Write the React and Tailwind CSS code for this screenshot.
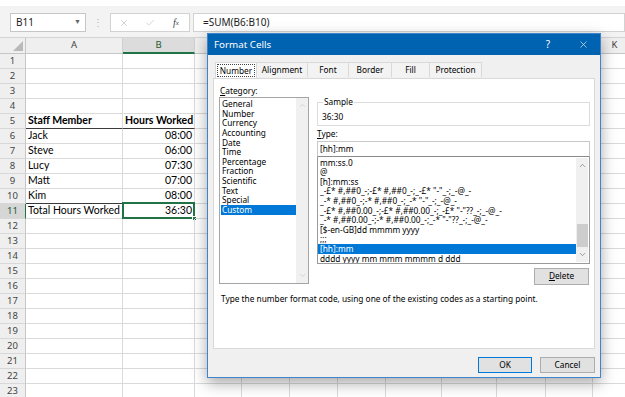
import { ChevronUp, ChevronDown, X, Check } from "lucide-react";

const cols = [
  { k: "A", w: "w-[97px]" },
  { k: "B", w: "w-[72px]" },
  { k: "C", w: "w-[47px]" },
  { k: "D", w: "w-[48px]" },
  { k: "E", w: "w-[48px]" },
  { k: "F", w: "w-[48px]" },
  { k: "G", w: "w-[56px]" },
  { k: "H", w: "w-[55px]" },
  { k: "I", w: "w-[49px]" },
  { k: "J", w: "w-[47px]" },
  { k: "K", w: "w-[44px]" },
];

// headers C..J sit under the dialog, only these letters show
const shownHeaders = ["A", "B", "K"];

const data = {
  5: ["Staff Member", "Hours Worked", true],
  6: ["Jack", "08:00"],
  7: ["Steve", "06:00"],
  8: ["Lucy", "07:30"],
  9: ["Matt", "07:00"],
  10: ["Kim", "08:00"],
  11: ["Total Hours Worked", "36:30"],
};

const categories = [
  "General", "Number", "Currency", "Accounting", "Date", "Time",
  "Percentage", "Fraction", "Scientific", "Text", "Special", "Custom",
];

const formats = [
  "mm:ss.0",
  "@",
  "[h]:mm:ss",
  '_-£* #,##0_-;-£* #,##0_-;_-£* "-"_-;_-@_-',
  '_-* #,##0_-;-* #,##0_-;_-* "-"_-;_-@_-',
  '_-£* #,##0.00_-;-£* #,##0.00_-;_-£* "-"??_-;_-@_-',
  '_-* #,##0.00_-;-* #,##0.00_-;_-* "-"??_-;_-@_-',
  "[$-en-GB]dd mmmm yyyy",
  ";;;",
  "[hh]:mm",
  "dddd yyyy mm mmm mmmm d ddd",
];

const tabs = [
  { t: "Alignment", w: "w-[51px]" },
  { t: "Font", w: "w-[41px]" },
  { t: "Border", w: "w-[43px]" },
  { t: "Fill", w: "w-[38px]" },
  { t: "Protection", w: "w-[52px]" },
];

const rowNums = Array.from({ length: 23 }, (_, i) => i + 1);

function Row({ n }) {
  const d = data[n];
  const sel = n === 11;
  return (
    <div className="flex h-[15px] shrink-0">
      <div
        className={`flex w-[26px] shrink-0 items-center justify-center border-b border-r border-b-[#d8d8d8] text-[9.5px] ${
          sel ? "bg-[#d6d6d6] border-r-[#217346] text-[#1f5a36]" : "bg-[#efefef] border-r-[#c6c6c6] text-[#444]"
        }`}
      >
        {n}
      </div>
      {cols.map((c, i) => {
        const dark = (n === 5 || n === 10) && i < 2;
        return (
          <div
            key={c.k}
            className={`relative flex ${c.w} shrink-0 items-center overflow-visible whitespace-nowrap border-b border-r border-r-[#dadada] font-['Lato',sans-serif] text-[10.5px] text-black ${
              dark ? "border-b-[#3a3a3a]" : "border-b-[#dadada]"
            } ${i === 1 && !(d && d[2]) ? "justify-end pr-[2px]" : "pl-[2px]"} ${d && d[2] ? "font-bold" : ""}`}
          >
            {d && i < 2 ? d[i] : ""}
            {sel && i === 1 && (
              <>
                <div className="absolute -left-[1px] -top-[2px] h-[17px] w-[73px] border-2 border-[#217346]" />
                <div className="absolute -bottom-[3px] -right-[3px] h-[5px] w-[5px] border border-white bg-[#217346]" />
              </>
            )}
          </div>
        );
      })}
    </div>
  );
}

function Scrollbar({ thumb, dim, className }) {
  return (
    <div className={`flex w-[12px] shrink-0 flex-col items-center justify-between bg-[#f0f0f0] py-[3px] ${className}`}>
      <ChevronUp size={9} strokeWidth={1.6} className={dim ? "text-[#c2c2c2]" : "text-[#606060]"} />
      {thumb}
      <ChevronDown size={9} strokeWidth={1.6} className={dim ? "text-[#c2c2c2]" : "text-[#606060]"} />
    </div>
  );
}

function FormatCells() {
  return (
    <div className="absolute left-[207px] top-[33px] flex h-[345px] w-[394px] flex-col border border-[#3c84cc] bg-[#f0f0f0] font-['Noto_Sans',sans-serif] text-[8.3px] leading-[9.65px] text-black shadow-[0_5px_14px_rgba(0,0,0,0.35)]">
      <div className="flex h-[21px] shrink-0 items-center bg-[#0063b1] pl-[6px] text-white">
        <span className="text-[9.8px]">Format Cells</span>
        <span className="ml-auto text-[10px]">?</span>
        <X size={11} strokeWidth={1.3} className="ml-[28px] mr-[11px]" />
      </div>

      <div className="px-[5px] pt-[7px]">
        <div className="flex h-[16px] pl-[2px]">
          <div className="relative z-10 -mb-[1px] flex h-[16px] w-[42px] items-center justify-center border border-b-0 border-[#d9d9d9] bg-white">
            <div className="flex h-[13px] w-[38px] items-center justify-center border border-dotted border-[#444]">Number</div>
          </div>
          {tabs.map((t) => (
            <div key={t.t} className={`flex h-[15px] ${t.w} items-center justify-center border border-l-0 border-b-0 border-[#d9d9d9] bg-[#f3f3f3]`}>
              {t.t}
            </div>
          ))}
        </div>

        <div className="flex h-[271px] flex-col border border-[#d9d9d9] bg-white pt-[7px]">
          <div className="flex pl-[5px] pr-[4px]">
            <div className="flex w-[90px] shrink-0 flex-col">
              <div className="h-[11px] pl-[1px]"><u>C</u>ategory:</div>
              <div className="flex h-[187px] border border-[#a5a5a5] bg-white">
                <div className="flex flex-1 flex-col pl-[1px] pt-[1px]">
                  {categories.map((c) => (
                    <div key={c} className={`h-[9.65px] pl-[1px] ${c === "Custom" ? "bg-[#0078d7] text-white" : ""}`}>
                      {c}
                    </div>
                  ))}
                </div>
                <Scrollbar dim />
              </div>
            </div>

            <div className="ml-[8px] mt-[11px] flex flex-1 flex-col">
              <fieldset className="border border-[#dcdcdc] px-[4px] pb-[3px]">
                <legend className="ml-[1px] px-[1px] leading-[10px]">Sample</legend>
                <div className="pt-[5px]">36:30</div>
              </fieldset>
              <div className="mt-[3px] h-[12px]"><u>T</u>ype:</div>
              <div className="flex h-[16px] items-center border border-[#c8c8c8] border-b-[#8a8a8a] pl-[2px]">[hh]:mm</div>
              <div className="flex h-[107px] border border-t-0 border-[#9a9a9a]">
                <div className="flex flex-1 flex-col overflow-hidden whitespace-nowrap pt-[1px]">
                  {formats.map((f, i) => (
                    <div key={i} className={`h-[9.6px] pl-[2px] ${i === 9 ? "bg-[#0078d7] text-white" : ""}`}>
                      {f}
                    </div>
                  ))}
                </div>
                <Scrollbar
                  className="my-[1px] mr-[1px]"
                  thumb={<div className="mt-auto mb-[3px] h-[23px] w-[11px] bg-[#cdcdcd]" />}
                />
              </div>
              <div className="mt-[4px] mr-[1px] flex h-[17px] w-[55px] items-center justify-center self-end border border-[#adadad] bg-[#e1e1e1]">
                <span><u>D</u>elete</span>
              </div>
            </div>
          </div>
          <div className="mt-[9px] pl-[7px]">Type the number format code, using one of the existing codes as a starting point.</div>
        </div>
      </div>

      <div className="flex justify-end gap-[8px] pr-[5px] pt-[8px]">
        <div className="flex h-[16px] w-[54px] items-center justify-center border border-[#0078d7] bg-[#e1e1e1]">OK</div>
        <div className="flex h-[16px] w-[55px] items-center justify-center border border-[#adadad] bg-[#e1e1e1]">Cancel</div>
      </div>
    </div>
  );
}

export default function App() {
  return (
    <div className="relative h-[397px] w-[625px] overflow-hidden bg-white font-['Noto_Sans',sans-serif]">
      <div className="h-[6px] bg-white" />
      {/* formula bar */}
      <div className="flex h-[32px] items-start border-b border-[#d4d4d4] bg-[#f3f3f3] pt-[7px]">
        <div className="ml-[10px] flex h-[19px] w-[76px] items-center justify-between border border-[#c6c6c6] bg-white pl-[5px] pr-[4px] text-[10px] text-[#222]">
          <span>B11</span>
          <span className="text-[7px] text-[#666]">▼</span>
        </div>
        <div className="flex h-[19px] w-[24px] items-center justify-center text-[10px] text-[#b5b5b5]">⋮</div>
        <div className="flex h-[19px] w-[80px] items-center border border-[#d2d2d2] bg-white">
          <div className="flex w-[26px] justify-center"><X size={10} strokeWidth={1.3} className="text-[#b0b0b0]" /></div>
          <div className="flex w-[26px] justify-center"><Check size={10} strokeWidth={1.3} className="text-[#b0b0b0]" /></div>
          <div className="flex w-[26px] justify-center font-['Liberation_Serif',serif] text-[10px] italic text-[#444]">f<span className="text-[7px] mt-[3px]">x</span></div>
        </div>
        <div className="ml-[3px] flex h-[19px] flex-1 items-center border border-[#d2d2d2] bg-white pl-[9px] text-[10px] text-[#222]">=SUM(B6:B10)</div>
      </div>

      {/* column headers */}
      <div className="flex h-[16px]">
        <div className="relative w-[26px] shrink-0 border-b border-r border-[#c6c6c6] bg-[#efefef]">
          <svg width="26" height="16" className="absolute left-0 top-0">
            <polygon points="23,3 23,13 13,13" fill="#b9b9b9" />
          </svg>
        </div>
        {cols.map((c) => (
          <div
            key={c.k}
            className={`flex ${c.w} shrink-0 items-center justify-center border-r border-[#d0d0d0] text-[9.5px] ${
              c.k === "B" ? "border-b-2 border-b-[#217346] bg-[#dcdcdc] text-[#1f5a36]" : "border-b border-b-[#c6c6c6] bg-[#efefef] text-[#444]"
            }`}
          >
            {shownHeaders.includes(c.k) ? c.k : ""}
          </div>
        ))}
      </div>

      {rowNums.map((n) => (
        <Row key={n} n={n} />
      ))}

      <FormatCells />
    </div>
  );
}
